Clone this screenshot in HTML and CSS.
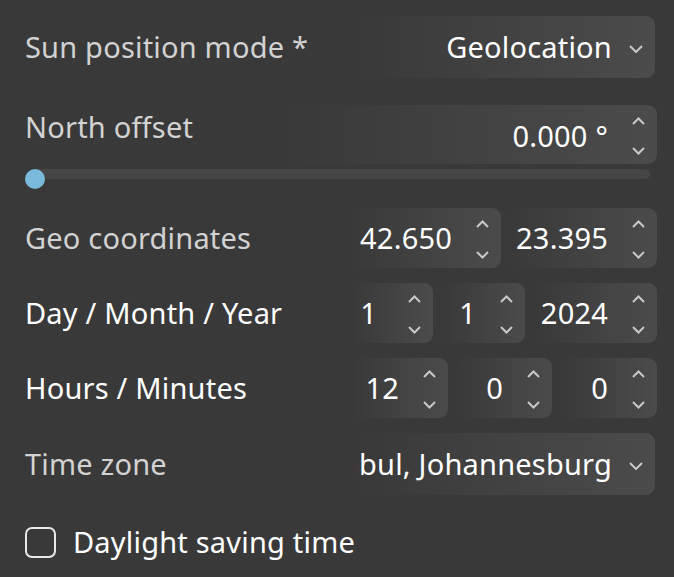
FILE: index.html
```html
<html>
  <head>
    <meta charset="UTF-8" />
    <link rel="stylesheet" href="styles.css">
  </head>
  <body>
    <div class="panel">
      <div class="row rowMode">
        <span class="label">Sun position mode *</span>
        <div class="field select selectMode">
          <span class="selectValue">Geolocation</span>
          <svg class="chevron" width="14" height="8" viewBox="0 0 14 8"><polyline points="1,1 7,7 13,1" /></svg>
        </div>
      </div>

      <div class="row rowNorth">
        <span class="label labelTop">North offset</span>
        <div class="field number numberNorth">
          <span class="value">0.000 °</span>
          <div class="spinner">
            <svg width="13" height="8" viewBox="0 0 13 8"><polyline points="1,7 6.5,1.5 12,7" /></svg>
            <svg width="13" height="8" viewBox="0 0 13 8"><polyline points="1,1 6.5,6.5 12,1" /></svg>
          </div>
        </div>
      </div>
      <div class="slider">
        <div class="track"></div>
        <div class="thumb"></div>
      </div>

      <div class="row">
        <span class="label">Geo coordinates</span>
        <div class="group groupGeo">
          <div class="field number">
            <span class="value">42.650</span>
            <div class="spinner">
              <svg width="13" height="8" viewBox="0 0 13 8"><polyline points="1,7 6.5,1.5 12,7" /></svg>
              <svg width="13" height="8" viewBox="0 0 13 8"><polyline points="1,1 6.5,6.5 12,1" /></svg>
            </div>
          </div>
          <div class="field number">
            <span class="value">23.395</span>
            <div class="spinner">
              <svg width="13" height="8" viewBox="0 0 13 8"><polyline points="1,7 6.5,1.5 12,7" /></svg>
              <svg width="13" height="8" viewBox="0 0 13 8"><polyline points="1,1 6.5,6.5 12,1" /></svg>
            </div>
          </div>
        </div>
      </div>

      <div class="row">
        <span class="label labelBright">Day / Month / Year</span>
        <div class="group groupDate">
          <div class="field number">
            <span class="value valueDay">1</span>
            <div class="spinner">
              <svg width="13" height="8" viewBox="0 0 13 8"><polyline points="1,7 6.5,1.5 12,7" /></svg>
              <svg width="13" height="8" viewBox="0 0 13 8"><polyline points="1,1 6.5,6.5 12,1" /></svg>
            </div>
          </div>
          <div class="field number">
            <span class="value">1</span>
            <div class="spinner">
              <svg width="13" height="8" viewBox="0 0 13 8"><polyline points="1,7 6.5,1.5 12,7" /></svg>
              <svg width="13" height="8" viewBox="0 0 13 8"><polyline points="1,1 6.5,6.5 12,1" /></svg>
            </div>
          </div>
          <div class="field number">
            <span class="value">2024</span>
            <div class="spinner">
              <svg width="13" height="8" viewBox="0 0 13 8"><polyline points="1,7 6.5,1.5 12,7" /></svg>
              <svg width="13" height="8" viewBox="0 0 13 8"><polyline points="1,1 6.5,6.5 12,1" /></svg>
            </div>
          </div>
        </div>
      </div>

      <div class="row">
        <span class="label labelBright">Hours / Minutes</span>
        <div class="group groupTime">
          <div class="field number">
            <span class="value">12</span>
            <div class="spinner">
              <svg width="13" height="8" viewBox="0 0 13 8"><polyline points="1,7 6.5,1.5 12,7" /></svg>
              <svg width="13" height="8" viewBox="0 0 13 8"><polyline points="1,1 6.5,6.5 12,1" /></svg>
            </div>
          </div>
          <div class="field number">
            <span class="value">0</span>
            <div class="spinner">
              <svg width="13" height="8" viewBox="0 0 13 8"><polyline points="1,7 6.5,1.5 12,7" /></svg>
              <svg width="13" height="8" viewBox="0 0 13 8"><polyline points="1,1 6.5,6.5 12,1" /></svg>
            </div>
          </div>
          <div class="field number">
            <span class="value">0</span>
            <div class="spinner">
              <svg width="13" height="8" viewBox="0 0 13 8"><polyline points="1,7 6.5,1.5 12,7" /></svg>
              <svg width="13" height="8" viewBox="0 0 13 8"><polyline points="1,1 6.5,6.5 12,1" /></svg>
            </div>
          </div>
        </div>
      </div>

      <div class="row rowZone">
        <span class="label">Time zone</span>
        <div class="field select selectZone">
          <span class="selectValue">Kabul, Johannesburg</span>
          <svg class="chevron" width="14" height="8" viewBox="0 0 14 8"><polyline points="1,1 7,7 13,1" /></svg>
        </div>
      </div>

      <label class="check">
        <span class="box"></span>
        <span class="checkText">Daylight saving time</span>
      </label>
    </div>
  </body>
</html>
```

FILE: styles.css
```css
body {
  margin: 0;
  background-color: #393939;
  font-family: 'Noto Sans', 'Open Sans', sans-serif;
  font-size: 29px;
  letter-spacing: 0.2px;
  line-height: 38px;
  color: #ffffff;
}
.panel {
  padding: 16px 17px 0 25px;
}
.row {
  display: flex;
  justify-content: space-between;
  align-items: center;
  height: 60px;
  margin-bottom: 15px;
}
.rowMode {
  height: 62px;
  margin-bottom: 27px;
}
.rowNorth {
  height: 59px;
  margin-bottom: 3px;
  align-items: flex-start;
}
.rowZone {
  height: 62px;
  margin-bottom: 28px;
}
.label {
  color: #d2d2d2;
  white-space: nowrap;
}
.labelTop {
  margin-top: 3px;
}
.labelBright {
  color: #ffffff;
}
.field {
  display: flex;
  align-items: center;
  height: 100%;
  border-radius: 9px;
  background: linear-gradient(to right, rgba(74, 74, 74, 0), #4b4b4b);
  box-sizing: border-box;
}
.select {
  width: 300px;
  margin-right: 2px;
  padding-right: 12px;
}
.selectValue {
  flex: 1;
  display: flex;
  justify-content: flex-end;
  white-space: nowrap;
  overflow: hidden;
  margin-right: 17px;
}
.selectZone {
  width: 298px;
}
.chevron {
  flex: none;
  margin-top: 3px;
}
.chevron polyline,
.spinner polyline {
  fill: none;
  stroke: #c8c8c8;
  stroke-width: 2;
}
.number {
  padding-right: 12px;
}
.numberNorth {
  width: 372px;
}
.numberNorth .value {
  margin-top: 3px;
}
.value {
  flex: 1;
  text-align: right;
  padding-right: 24px;
  white-space: nowrap;
}
.valueDay {
  padding-right: 31px;
}
.spinner {
  display: flex;
  flex-direction: column;
  justify-content: space-between;
  height: 100%;
  box-sizing: border-box;
  padding: 12px 0 9px 0;
}
.group {
  display: grid;
  height: 100%;
  width: 306px;
}
.groupGeo {
  grid-template-columns: 150px 150px;
  column-gap: 6px;
}
.groupDate {
  grid-template-columns: 82px 82px 122px;
  column-gap: 10px;
}
.groupTime {
  grid-template-columns: 97px 96px 97px;
  column-gap: 8px;
}
.slider {
  position: relative;
  height: 20px;
  margin-bottom: 19px;
}
.track {
  margin: 5px 7px 0 10px;
  height: 10px;
  border-radius: 5px;
  background-color: #464646;
}
.thumb {
  position: absolute;
  left: 0;
  top: 0;
  width: 20px;
  height: 20px;
  border-radius: 50%;
  background-color: #7ab9d9;
}
.check {
  display: flex;
  align-items: center;
  gap: 17px;
}
.box {
  width: 31px;
  height: 31px;
  box-sizing: border-box;
  border: 2px solid #e8e8e8;
  border-radius: 7px;
}
.checkText {
  color: #ffffff;
}
```
